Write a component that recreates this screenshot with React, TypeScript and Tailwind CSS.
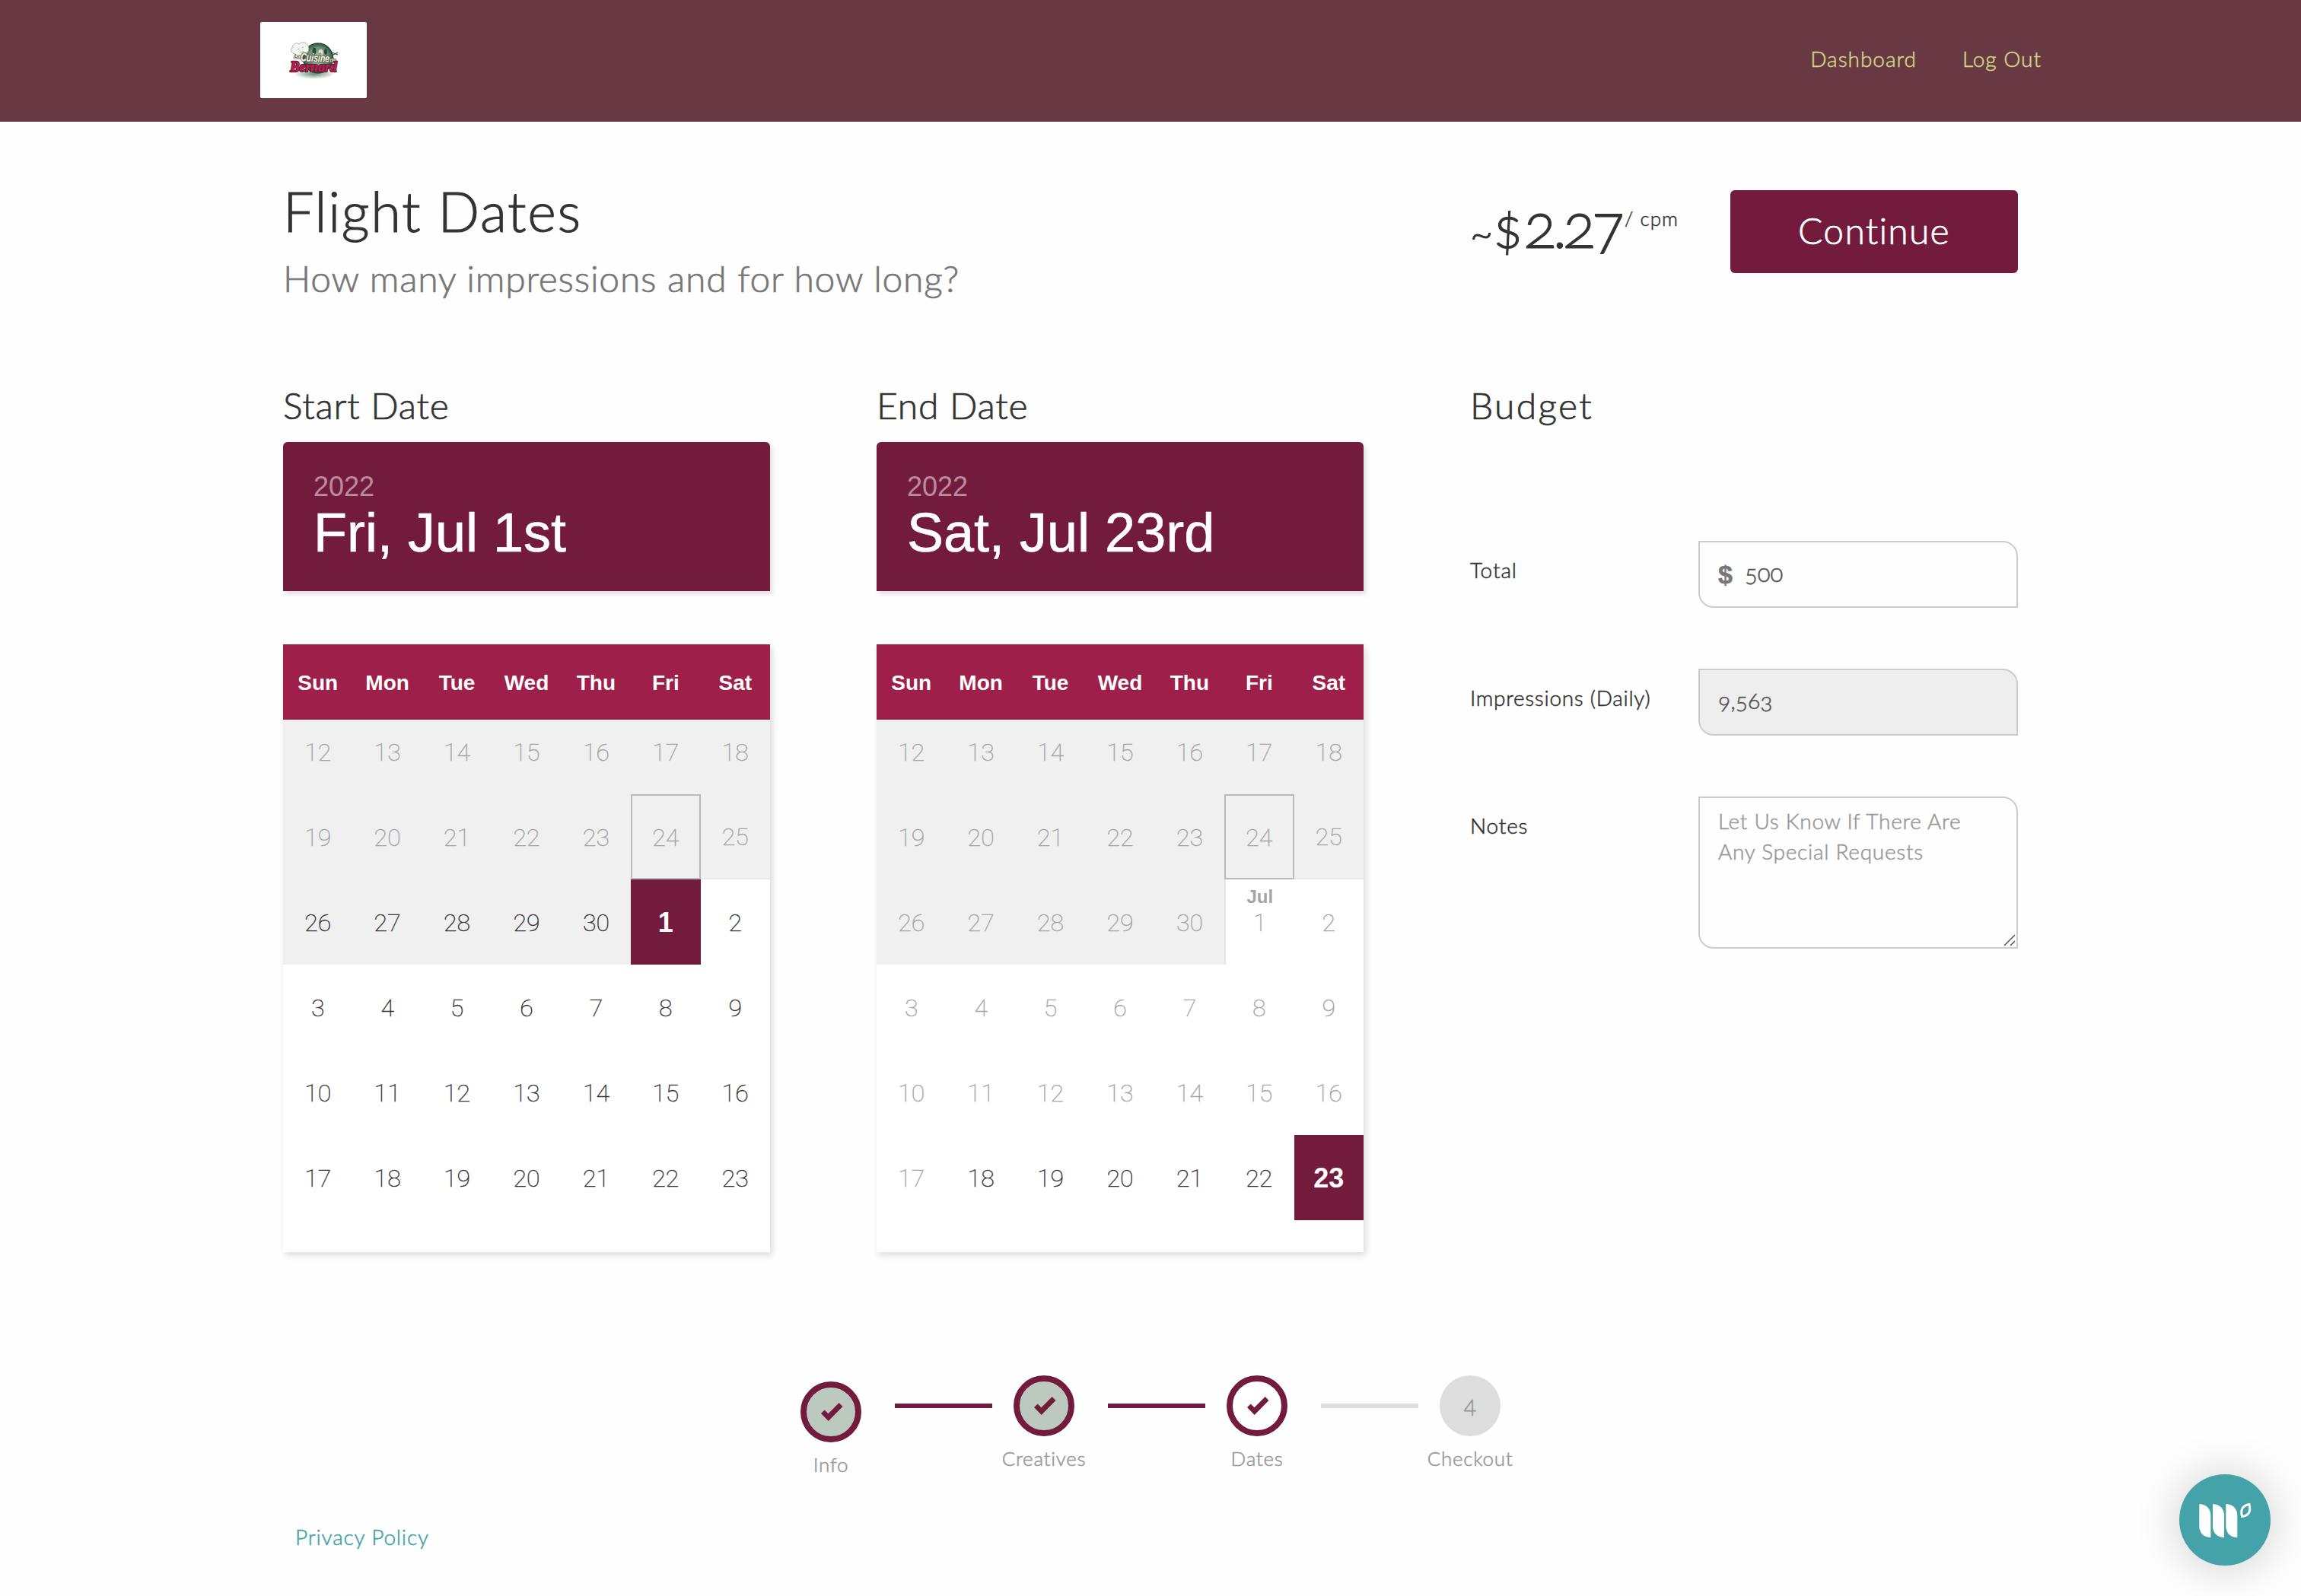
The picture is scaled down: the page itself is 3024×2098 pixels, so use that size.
type Day = { label: string; tone?: 'muted' | 'dark'; past?: boolean; today?: boolean; selected?: boolean; month?: string; edge?: string };

const WEEKDAYS = ['Sun', 'Mon', 'Tue', 'Wed', 'Thu', 'Fri', 'Sat'];

const range = (from: number, to: number) => Array.from({ length: to - from + 1 }, (_, i) => from + i);

// 12 June to 23 July; everything before firstActive can't be picked
function buildDays(firstActive: number, selected: number): Day[] {
    const june = range(12, 30).map((n): Day => ({
        label: String(n),
        tone: n < firstActive ? 'muted' : 'dark',
        past: true,
        today: n === 24,
        edge: n === 25 ? 'border-b-2 border-[#e8e8e8]' : '',
    }));
    const july = range(1, 23).map((n): Day => ({
        label: String(n),
        tone: n + 30 < firstActive ? 'muted' : 'dark',
        selected: n === selected,
        month: n === 1 && selected !== 1 ? 'Jul' : undefined,
        edge: n === 1 && selected !== 1 ? 'border-l-2 border-[#e8e8e8]' : '',
    }));
    return [...june, ...july];
}

const START_DAYS = buildDays(26, 1);
const END_DAYS = buildDays(48, 23);

function Logo() {
    return (
        <svg viewBox="0 0 140 100" className="h-[100px] w-[140px] rounded-[2px] bg-white [-webkit-text-stroke:0px]">
            <defs>
                <radialGradient id="plate" cx="50%" cy="50%" r="50%">
                    <stop offset="0" stopColor="#b9c9b4" />
                    <stop offset="0.7" stopColor="#6f8f78" />
                    <stop offset="1" stopColor="#2c5540" />
                </radialGradient>
                <radialGradient id="ground">
                    <stop offset="0" stopColor="#3f6b52" stopOpacity="0.8" />
                    <stop offset="1" stopColor="#3f6b52" stopOpacity="0" />
                </radialGradient>
            </defs>
            <ellipse cx="71" cy="68" rx="27" ry="7" fill="url(#ground)" />
            <circle cx="76" cy="47.500" r="19.500" fill="url(#plate)" stroke="#244a37" strokeWidth="1.500" />
            <ellipse cx="79.500" cy="40" rx="2.800" ry="4" fill="#efe3cf" />
            <ellipse cx="71" cy="38" rx="2.500" ry="4.500" fill="#2c4a3a" />
            <ellipse cx="86" cy="39" rx="2" ry="4" fill="#2c4a3a" />
            <path d="M46 42c-5-1-7-5-4-8 0-5 6-8 9-5 4-4 10-2 11 1 3 3 2 9-1 11-2 3-5 2-7 3-3 1-6 0-8-2z" fill="#f4f8f2" stroke="#94a897" strokeWidth="0.800" />
            <path d="M49 36l3-1M55 34l2-1M52 39c2 1 4 0 5-1" stroke="#8aa08e" strokeWidth="0.800" fill="none" />
            <path d="M94 40l8 3M94 44l8-4" stroke="#2c5540" strokeWidth="1.200" />
            {/* every word is laid twice: dark outline first, then the fill */}
            <g fontStyle="italic" fontWeight="700" fontFamily="Liberation Sans, sans-serif" strokeLinejoin="round" transform="rotate(3 70 52)">
                <text x="44" y="49" fontSize="7" fill="#f3ead6" stroke="#23422f" strokeWidth="1.200" paintOrder="stroke">La</text>
                <text x="53" y="52" fontSize="15" textLength="38" lengthAdjust="spacingAndGlyphs" fill="#23422f" stroke="#23422f" strokeWidth="2">Cuisine</text>
                <text x="53" y="52" fontSize="15" textLength="38" lengthAdjust="spacingAndGlyphs" fill="#fbf3e0" stroke="#fbf3e0" strokeWidth="0.300">Cuisine</text>
                <text x="91.500" y="51" fontSize="7" fill="#f3ead6" stroke="#23422f" strokeWidth="1.200" paintOrder="stroke">de</text>
            </g>
            <g fontStyle="italic" fontWeight="700" fontFamily="Liberation Serif, serif" fontSize="19" strokeLinejoin="round">
                <text x="39.500" y="64.500" textLength="61" lengthAdjust="spacingAndGlyphs" fill="#3c2a2c" stroke="#3c2a2c" strokeWidth="2.400">Bernard</text>
                <text x="39.500" y="64.500" textLength="61" lengthAdjust="spacingAndGlyphs" fill="#cf1656" stroke="#cf1656" strokeWidth="0.300">Bernard</text>
            </g>
        </svg>
    );
}

function DayCell({ day }: { day: Day }) {
    let look = day.tone === 'muted' ? 'text-[#a5a5a5]' : 'text-[#333333]';
    if (day.past) look += ' bg-[#f0f0f0]';
    if (day.selected) {
        return (
            <div className="flex h-28 items-center justify-center bg-[#731b3c] pt-[2px] font-['Liberation_Sans',sans-serif] text-[36px] leading-[40px] font-bold text-white">
                {day.label}
            </div>
        );
    }
    return (
        <div className={`relative flex h-28 items-center justify-center text-[32px] ${look} ${day.edge ?? ''} ${day.today ? 'outline-2 -outline-offset-2 outline-[#bababa]' : ''}`}>
            {day.month && (
                <span className="absolute inset-x-0 top-2 text-center font-['Liberation_Sans',sans-serif] text-[24px] leading-[30px] font-bold">{day.month}</span>
            )}
            <span className="pt-[2px] leading-[40px] font-thin [-webkit-text-stroke:0.45px]">{day.label}</span>
        </div>
    );
}

function DatePicker({ title, value, days }: { title: string; value: string; days: Day[] }) {
    return (
        <section className="w-[640px]">
            <h2 className="pt-px text-[48px] leading-[60px] tracking-[0.016em] [-webkit-text-stroke:0.7px]">{title}</h2>
            <div className="mt-[18px] h-[196px] rounded-t-[6px] bg-[#731b3c] px-10 pt-[37px] font-['Liberation_Sans',sans-serif] font-normal text-white shadow-[3px_4px_6px_rgba(0,0,0,0.13)]">
                <p className="text-[36px] leading-[44px] text-white/50 [-webkit-text-stroke:0px]">2022</p>
                <p className="text-[72px] leading-[76px] [-webkit-text-stroke:0.6px]">{value}</p>
            </div>
            <div className="mt-[70px] shadow-[3px_4px_8px_rgba(0,0,0,0.14)] [-webkit-text-stroke:0px]">
                <div className="grid h-[99px] grid-cols-7 items-center border-b-2 border-[#961d46] bg-[#9e1f4a] font-['Liberation_Sans',sans-serif] text-[28px] font-bold text-white">
                    {WEEKDAYS.map((d) => (
                        <span key={d} className="pt-[5px] text-center">{d}</span>
                    ))}
                </div>
                <div className="h-[700px] overflow-hidden bg-white font-[Roboto,sans-serif]">
                    <div className="-mt-[14px] grid grid-cols-7">
                        {days.map((day, i) => (
                            <DayCell key={i} day={day} />
                        ))}
                    </div>
                </div>
            </div>
        </section>
    );
}

function BudgetForm() {
    return (
        <section className="w-[720px] text-[28px]">
            <h2 className="mb-[148px] pt-px text-[48px] leading-[60px] tracking-[0.048em] [-webkit-text-stroke:0.7px]">Budget</h2>
            <div className="flex flex-col gap-20">
                <label className="flex h-[88px]">
                    <span className="w-[300px] pt-[18px] leading-[40px] tracking-[0.032em]">Total</span>
                    <span className="flex w-[420px] items-center rounded-tr-[20px] rounded-bl-[20px] border-2 border-[#cccccc] pl-6">
                        <span className="w-[35px] font-['Liberation_Sans',sans-serif] text-[34px] font-bold text-[#777777]">$</span>
                        <input readOnly value="500" className="w-[300px] pb-[3px] text-[31px] text-[#555555] outline-none [font-feature-settings:'onum']" />
                    </span>
                </label>
                <label className="flex h-[88px]">
                    <span className="w-[300px] pt-[18px] leading-[40px] tracking-[0.025em]">Impressions (Daily)</span>
                    <input readOnly value="9,563" className="w-[420px] rounded-tr-[20px] rounded-bl-[20px] border-2 border-[#cccccc] bg-[#eeeeee] pb-[6px] pl-6 text-[30px] text-[#555555] outline-none [font-feature-settings:'onum']" />
                </label>
                <label className="flex h-[200px]">
                    <span className="w-[300px] pt-[18px] leading-[40px] tracking-[0.03em]">Notes</span>
                    <span className="relative h-[200px] w-[420px]">
                        <textarea
                            placeholder="Let Us Know If There Are Any Special Requests"
                            className="block h-full w-full resize-none rounded-tr-[20px] rounded-bl-[20px] border-2 border-[#cccccc] py-[10px] pr-12 pl-6 leading-[40px] tracking-[0.026em] outline-none placeholder:text-[#999999]"
                        />
                        <svg viewBox="0 0 16 16" className="absolute right-[3px] bottom-[3px] h-4 w-4 fill-none stroke-[#555555] stroke-[1.500]">
                            <path d="M1 15L15 1M9 15l6-6" />
                        </svg>
                    </span>
                </label>
            </div>
        </section>
    );
}

const STEPS = [
    { label: 'Info', circle: 'border-8 border-[#731b3c] bg-[#bcc9be]', offset: 'mt-2', line: 'bg-[#731b3c]', done: true },
    { label: 'Creatives', circle: 'border-8 border-[#731b3c] bg-[#bcc9be]', offset: '', line: 'bg-[#731b3c]', done: true },
    { label: 'Dates', circle: 'border-8 border-[#731b3c] bg-white', offset: '', line: 'bg-[#dddddd]', done: true },
    { label: 'Checkout', circle: 'bg-[#dddddd]', offset: '', line: '', done: false },
];

function Stepper() {
    return (
        <ol className="mt-[162px] flex h-[133px] justify-center">
            {STEPS.map((step, i) => (
                <li key={step.label} className="flex">
                    <div className={`flex w-20 flex-col items-center text-[#999999] ${step.offset}`}>
                        <div className={`flex h-20 w-20 items-center justify-center rounded-full ${step.circle}`}>
                            {step.done ? (
                                <svg viewBox="0 0 80 80" className="h-20 w-20 shrink-0 fill-[#731b3c]">
                                    <path d="M27 42l4.700-4.400 4.800 4.600L50.700 28l4.700 5L36.700 52z" />
                                </svg>
                            ) : (
                                <span className="pt-[2px] text-[29px] leading-none">{i + 1}</span>
                            )}
                        </div>
                        <span className="mt-[13px] text-[26px] leading-8 tracking-[0.028em] whitespace-nowrap">{step.label}</span>
                    </div>
                    {step.line && <div className={`mt-[37px] mr-7 ml-11 h-[6px] w-32 ${step.line}`} />}
                </li>
            ))}
        </ol>
    );
}

export default function App() {
    return (
        <div className="relative h-[2098px] overflow-hidden bg-[#fefefe] font-[Lato,sans-serif] font-light text-[#333333] [-webkit-text-stroke:0.55px]">
            <header className="flex h-40 items-start justify-between bg-[#683943] pr-[341px] pl-[342px]">
                <div className="pt-[29px]">
                    <Logo />
                </div>
                <nav className="flex gap-[60px] pt-[57px] text-[28px] leading-[40px] tracking-[0.035em] text-[#d0d684]">
                    <a>Dashboard</a>
                    <a>Log Out</a>
                </nav>
            </header>

            <main className="mx-auto w-[2280px]">
                <div className="flex h-[342px] justify-between pt-[77px]">
                    <div>
                        <h1 className="text-[72px] leading-[80px] tracking-[0.023em] [-webkit-text-stroke:1px]">Flight Dates</h1>
                        <p className="mt-[19px] text-[48px] leading-[60px] tracking-[0.016em] text-[#777777] [-webkit-text-stroke:0.7px]">How many impressions and for how long?</p>
                    </div>
                    <div className="flex w-[720px] justify-between pt-[13px]">
                        <p className="pt-[5px] text-[72px] leading-[80px] whitespace-nowrap [-webkit-text-stroke:1px] [font-feature-settings:'onum']">
                            <span className="text-[52px] leading-none">~</span>
                            <span className="tracking-[0.02em]">$</span>
                            <span className="text-[80px] leading-none tracking-[-0.065em]">2.27</span>
                            <span className="ml-[5px] align-[29px] text-[26px] leading-6 tracking-[0.04em] [-webkit-text-stroke:0.5px]">/ cpm</span>
                        </p>
                        <button className="h-[109px] w-[378px] rounded-[6px] bg-[#731b3c] pb-1 text-[48px] tracking-[0.026em] text-white [-webkit-text-stroke:0.7px]">Continue</button>
                    </div>
                </div>

                <div className="flex gap-[140px]">
                    <DatePicker title="Start Date" value="Fri, Jul 1st" days={START_DAYS} />
                    <DatePicker title="End Date" value="Sat, Jul 23rd" days={END_DAYS} />
                    <BudgetForm />
                </div>

                <Stepper />
                <a className="mt-[59px] ml-4 block text-[28px] leading-[40px] tracking-[0.03em] text-[#44a3a8]">Privacy Policy</a>
            </main>

            <button className="absolute right-10 bottom-10 h-[120px] w-[120px] rounded-full bg-[#44a3a8] shadow-[0_2px_60px_rgba(0,0,0,0.2)]">
                <svg viewBox="0 0 120 120" className="fill-white">
                    <path d="M26.300 39c9 .5 15 6 15 15v29.300c-9-.5-15-6-15-15z" />
                    <path d="M44 39c9 .5 15 6 15 15v29.300c-9-.5-15-6-15-15z" />
                    <path d="M61.300 39c9 .5 15 6 15 15v29.300c-9-.5-15-6-15-15z" />
                    <path d="M92 39.500c2 8 .5 15-9.500 16C80.500 47 82.500 41 92 39.500z" fill="none" stroke="#fff" strokeWidth="3" />
                </svg>
            </button>
        </div>
    );
}
